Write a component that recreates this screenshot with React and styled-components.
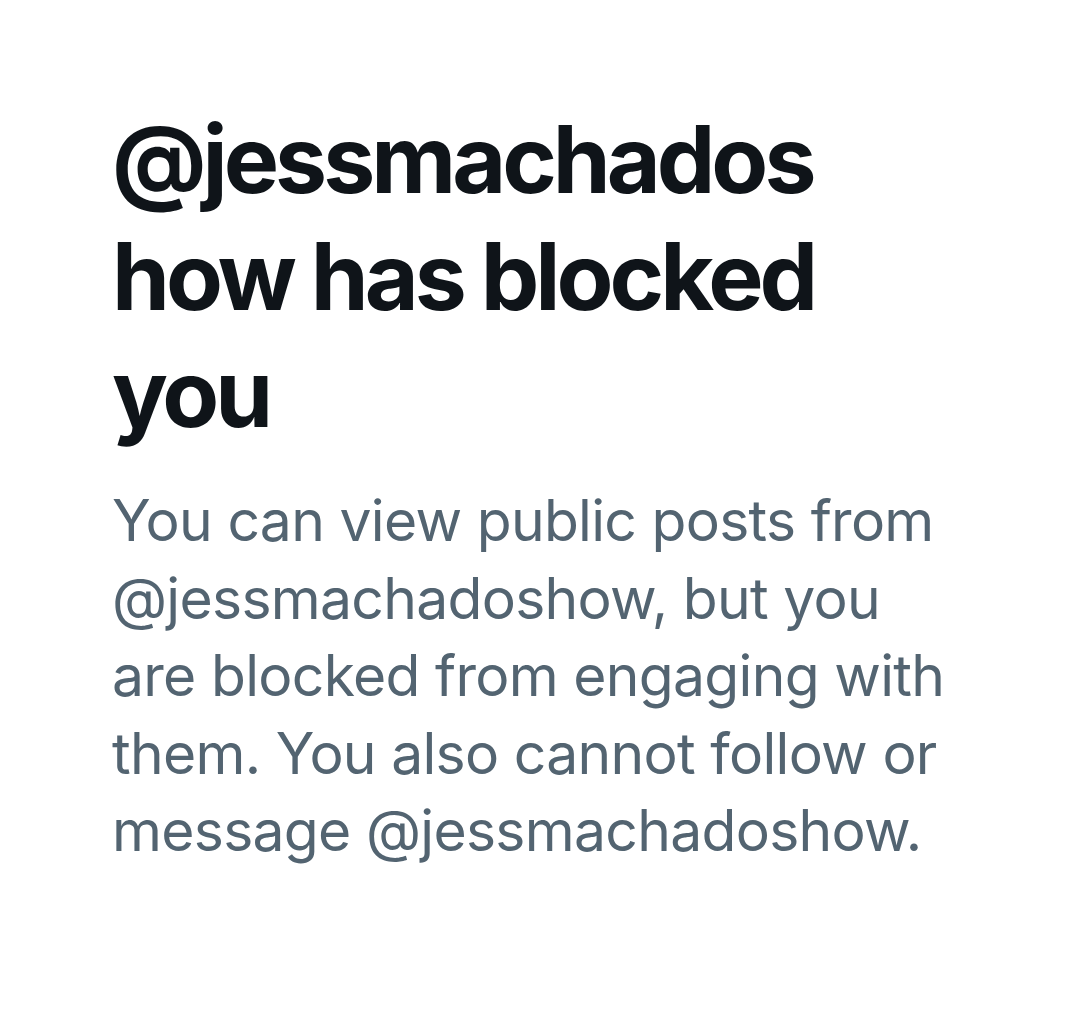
import React from 'react';
import styled, { createGlobalStyle } from 'styled-components';

const GlobalStyle = createGlobalStyle`
  html, body {
    margin: 0;
    padding: 0;
    background: #fff;
  }
  body {
    font-family: Inter, "Noto Sans", "Liberation Sans", sans-serif;
  }
`;

const Page = styled.div`
  width: 1080px;
  height: 1023px;
  background: #fff;
  box-sizing: border-box;
  padding: 101px 0 0 112px;
`;

const EmptyState = styled.div`
  width: 900px;
  display: flex;
  flex-direction: column;
  gap: 30px;
`;

const Title = styled.h1`
  margin: 0;
  font-size: 93px;
  line-height: 117px;
  font-weight: 700;
  color: #0f1419;
  letter-spacing: -4px;
`;

const Subtitle = styled.p`
  margin: 0;
  font-size: 57px;
  line-height: 77.5px;
  font-weight: 400;
  color: #536471;
  letter-spacing: -0.7px;
`;

const App = () => {
  const handle = 'jessmachadoshow';

  return (
    <>
      <GlobalStyle />
      <Page>
        <EmptyState>
          <Title>
            @jessmachados
            <br />
            how has blocked
            <br />
            you
          </Title>
          <Subtitle>
            You can view public posts from
            <br />
            @{handle}, but you
            <br />
            are blocked from engaging with
            <br />
            them. You also cannot follow or
            <br />
            message @{handle}.
          </Subtitle>
        </EmptyState>
      </Page>
    </>
  );
};

export default App;
